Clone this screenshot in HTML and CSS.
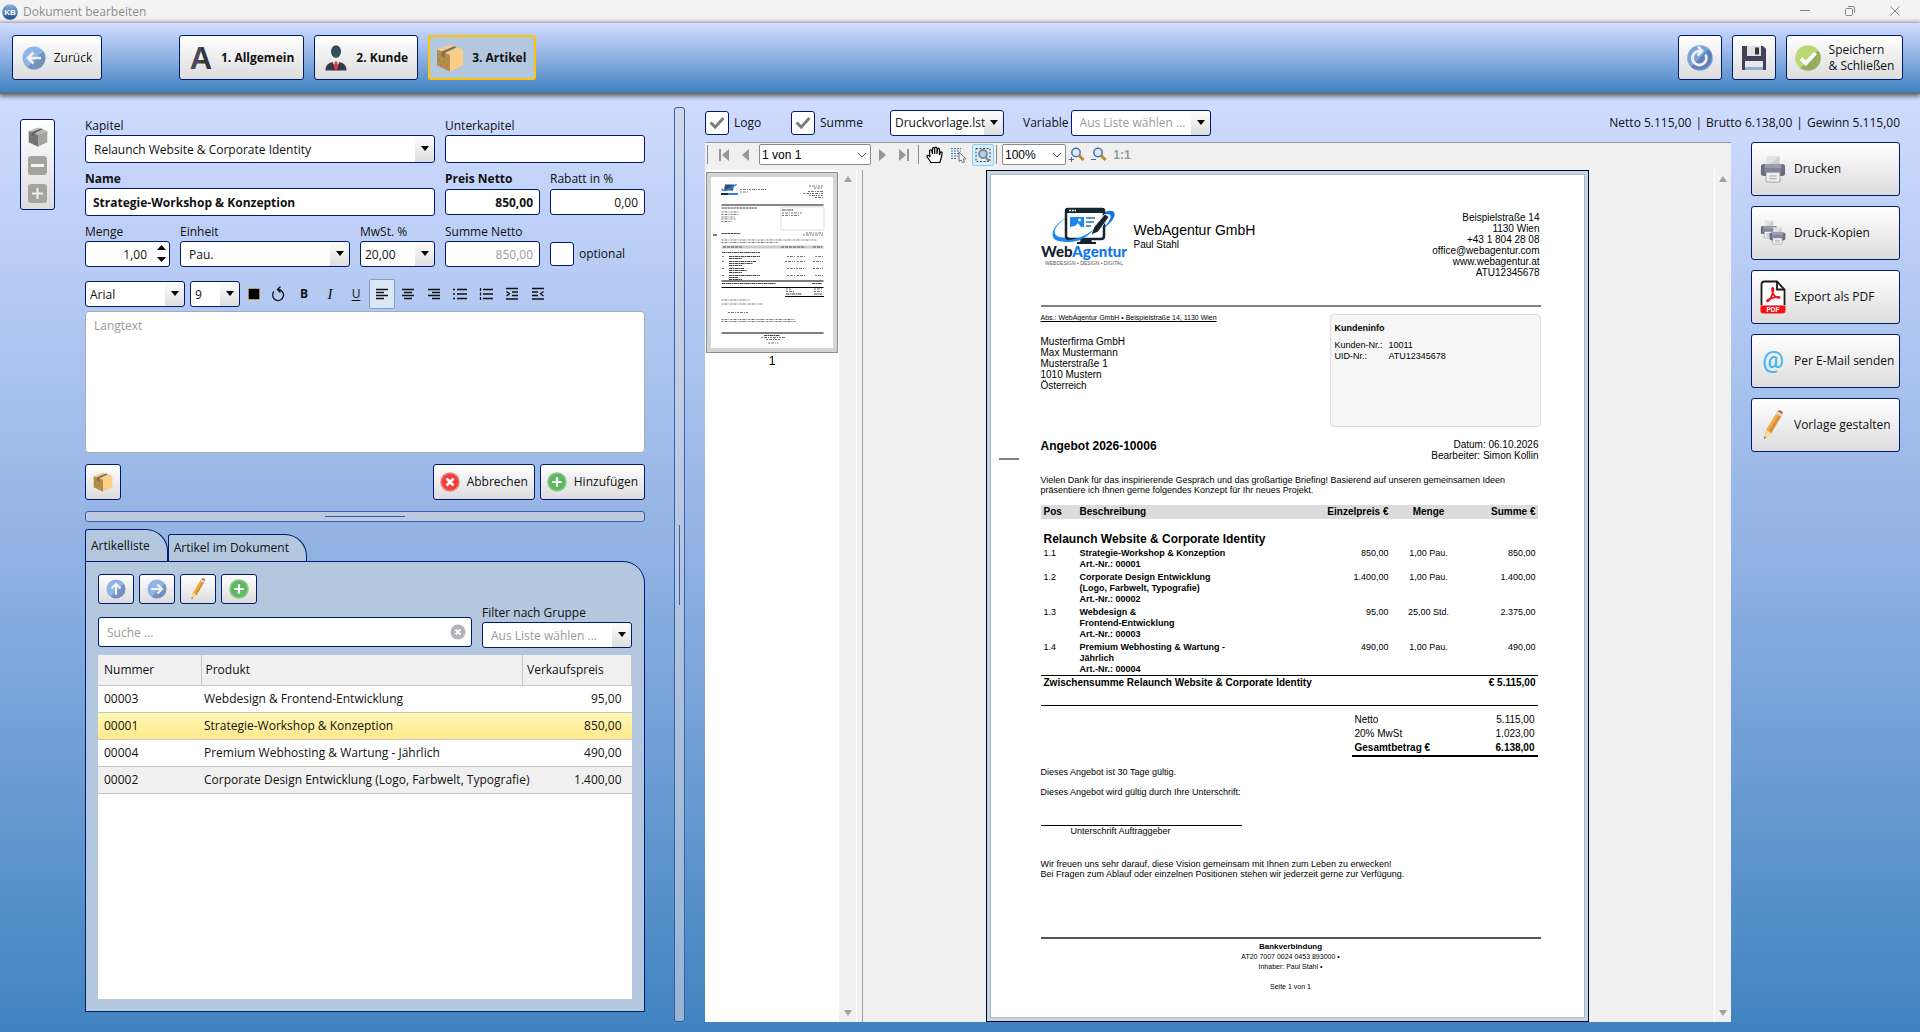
FILE: index.html
```html
<!DOCTYPE html>
<html lang="de">
<head>
<meta charset="utf-8">
<title>Dokument bearbeiten</title>
<link rel="stylesheet" href="styles.css">
</head>
<body>
<svg class="defs" aria-hidden="true">
  <defs>
    <linearGradient id="g-blue" x1="0" y1="0" x2="1" y2="1"><stop offset=".55" stop-color="#8fb4e8"/><stop offset=".56" stop-color="#7492bf"/></linearGradient>
    <linearGradient id="g-lime" x1="0" y1="0" x2="1" y2="1"><stop offset=".55" stop-color="#b9d774"/><stop offset=".56" stop-color="#98ad5c"/></linearGradient>
    <linearGradient id="g-kb" x1="0" y1="0" x2="0" y2="1"><stop offset="0" stop-color="#8fb3de"/><stop offset="1" stop-color="#1d4f93"/></linearGradient>
    <linearGradient id="g-a" x1="0" y1="0" x2="1" y2="0"><stop offset=".5" stop-color="#4d475c"/><stop offset=".51" stop-color="#333338"/></linearGradient>
    <symbol id="i-back" viewBox="0 0 24 24"><circle cx="12" cy="12" r="11.5" fill="url(#g-blue)"/><path d="M19 12H6.500M11.500 6.500L6 12l5.500 5.500" fill="none" stroke="#f3f3f3" stroke-width="2.600"/></symbol>
    <symbol id="i-up" viewBox="0 0 24 24"><circle cx="12" cy="12" r="11.5" fill="url(#g-blue)"/><path d="M12 19V6.500M6.500 11.500L12 6l5.500 5.500" fill="none" stroke="#f3f3f3" stroke-width="2.600"/></symbol>
    <symbol id="i-next" viewBox="0 0 24 24"><circle cx="12" cy="12" r="11.5" fill="url(#g-blue)"/><path d="M5 12h12.500M12.500 6.500L18 12l-5.500 5.500" fill="none" stroke="#f3f3f3" stroke-width="2.600"/></symbol>
    <symbol id="i-reload" viewBox="0 0 26 26"><circle cx="13" cy="13" r="12.800" fill="#74a5dc"/><path d="M22 4A12.800 12.800 0 0 1 4 22z" fill="#6080b4"/><path d="M18.500 9.500a7 7 0 1 1-5.500-3.500M11 1.500l4 4.500-4.500 4.500" fill="none" stroke="#f0f0f0" stroke-width="2.800"/></symbol>
    <symbol id="i-check" viewBox="0 0 26 26"><circle cx="13" cy="13" r="12.800" fill="url(#g-lime)"/><path d="M6 13.500l4.800 4.800L20.500 8" fill="none" stroke="#fafafa" stroke-width="4"/></symbol>
    <symbol id="i-add" viewBox="0 0 20 20"><circle cx="10" cy="10" r="9.800" fill="#8bc98c"/><circle cx="10" cy="10" r="8.300" fill="#5fb861"/><path d="M10 5.200v9.600M5.200 10h9.600" stroke="#fff" stroke-width="2.200"/></symbol>
    <symbol id="i-cancel" viewBox="0 0 20 20"><circle cx="10" cy="10" r="9.800" fill="#f57f79"/><circle cx="10" cy="10" r="8.300" fill="#f03e38"/><path d="M6.500 6.500l7 7M13.500 6.500l-7 7" stroke="#fff" stroke-width="2.600"/></symbol>
    <symbol id="i-box" viewBox="0 0 28 28"><path d="M1 5.500L14 .800l13 4.700-13 5.500z" fill="#f3cf91"/><path d="M1 5.500L14 11v16.500L1 21.500z" fill="#b58c48"/><path d="M27 5.500L14 11v16.500l13-6z" fill="#fbd086"/><path d="M5.500 7.400L18 2.200l3 1.100L9 8.800v5l-3.500-1.800z" fill="#84714e"/><path d="M3 15v3M5 20v2M8 17v3M11 21v3M10 14v2" stroke="#8d8a3c" stroke-width="1.200"/></symbol>
    <symbol id="i-boxgray" viewBox="0 0 28 28"><path d="M1 5.500L14 .800l13 4.700-13 5.500z" fill="#b9b9b4"/><path d="M1 5.500L14 11v16.500L1 21.500z" fill="#77777a"/><path d="M27 5.500L14 11v16.500l13-6z" fill="#a5a49d"/><path d="M5.500 7.400L18 2.200l3 1.100L9 8.800v5l-3.500-1.800z" fill="#636360"/><path d="M3 15v3M5 20v2M8 17v3M11 21v3M10 14v2" stroke="#55556a" stroke-width="1.200"/></symbol>
    <symbol id="i-person" viewBox="0 0 24 26"><ellipse cx="12" cy="6.500" rx="5" ry="6.300" fill="#2f5257"/><path d="M1.500 25.500c0-5 2-7 7-8.500l3.500 6 3.500-6c5 1.500 7 3.500 7 8.500z" fill="#3a3947"/><path d="M8.500 16h7L12 24.500z" fill="#f4f4f4"/><path d="M10.800 16.500h2.400l1 6-2.200 2.500-2.200-2.500z" fill="#e43b3b"/></symbol>
    <symbol id="i-save" viewBox="0 0 26 26"><path d="M1 1h21l3 3v21H1z" fill="#453f57"/><path d="M6 1h14v10H6z" fill="#dfe2e6"/><path d="M14 2.500h4v7h-4z" fill="#333"/><path d="M4 16h18v9H4z" fill="#e6e8ea"/><path d="M4 22h18v3H4z" fill="#8fb3cf"/></symbol>
    <symbol id="i-printer" viewBox="0 0 28 30"><path d="M7 1h14v11H7z" fill="#e3e3e3"/><path d="M21 1v11H8z" fill="#cfcfcf"/><rect x="1" y="9.500" width="26" height="13" rx="3" fill="#6d6e80"/><path d="M5 9.500h18v5H5z" fill="#9a9bac"/><path d="M5 14.500h18v4H5z" fill="#85869a"/><path d="M6.500 18.500h15V29h-15z" fill="#f1f1f3" stroke="#8a8b9a" stroke-width=".800"/><path d="M10 22.500h8M10 25.500h8" stroke="#a0a0aa" stroke-width="1.200"/></symbol>
    <symbol id="i-pdf" viewBox="0 0 26 34"><path d="M1.500 25V4.500q0-3 3-3H17l7.500 8V25" fill="#fff" stroke="#1b1b1b" stroke-width="1.800"/><path d="M17 1.500v8h7.500" fill="none" stroke="#1b1b1b" stroke-width="1.800"/><path d="M7 21.500c-1.500-2 11-5.500 12.500-4.500 1.500 1.500-4 1.500-6-2.500s-2-7-.5-6.500c2 1-3 14-6 13.500z" fill="none" stroke="#f2141c" stroke-width="1.700"/><path d="M.500 25.500h25v5q0 3-3 3h-19q-3 0-3-3z" fill="#fb0f17"/><text x="13" y="32" text-anchor="middle" font-family="Liberation Sans, sans-serif" font-weight="700" font-size="6.500" fill="#fff">PDF</text></symbol>
    <symbol id="i-pencil" viewBox="0 0 22 32"><path d="M4 21L15 3l5 3L9 24.500 2 30z" fill="#f0ad46"/><path d="M6.500 22.500L17.500 4.500l2.500 1.500L9 24.500z" fill="#d8913a"/><path d="M14 4.600L15.500 2.200l5 3L19 7.600z" fill="#d9dde2"/><path d="M15.500 2.200C17 0 22 2.500 20.500 5.200z" fill="#cc5b34"/><path d="M4 21l2.500 1.200L9 24.500 2 30z" fill="#f6d6a1"/><path d="M2.600 27.500L4 28.500 2 30z" fill="#444"/></symbol>
    <symbol id="i-tick" viewBox="0 0 24 24"><path d="M5 11.500l5 5L19 6.500" fill="none" stroke="#7b7b7b" stroke-width="3.200"/></symbol>
    <symbol id="i-zoom" viewBox="0 0 16 16"><circle cx="7" cy="5.500" r="4.200" fill="#dcebfa" stroke="#4a6ea9" stroke-width="1.500"/><path d="M10 8.500l4.500 4.500" stroke="#b98a26" stroke-width="3"/></symbol>
  </defs>
</svg>

<div class="titlebar">
  <svg class="app-logo" viewBox="0 0 16 16" aria-hidden="true"><circle cx="8" cy="8" r="7.800" fill="url(#g-kb)"/><text x="8" y="11" text-anchor="middle" font-family="Liberation Sans, sans-serif" font-weight="700" font-size="8" fill="#fff">KB</text></svg>
  <span>Dokument bearbeiten</span>
  <div class="window-controls">
    <button aria-label="Minimieren"><svg width="12" height="12" viewBox="0 0 12 12"><path d="M1 5.500h10"/></svg></button>
    <button aria-label="Wiederherstellen"><svg width="12" height="12" viewBox="0 0 12 12"><rect x="1.500" y="3.500" width="7" height="7" rx="1"/><path d="M4 1.500h5q1.500 0 1.500 1.500v5"/></svg></button>
    <button aria-label="Schließen"><svg width="12" height="12" viewBox="0 0 12 12"><path d="M1.500 1.500l9 9M10.500 1.500l-9 9"/></svg></button>
  </div>
</div>

<header class="header">
  <button class="btn tall back"><svg width="24" height="24"><use href="#i-back"/></svg>Zurück</button>
  <nav class="steps">
    <button class="btn tall step"><svg class="letter" width="24" height="26" viewBox="0 0 24 26"><text x="12" y="24" text-anchor="middle" font-family="Liberation Sans, sans-serif" font-weight="700" font-size="31" fill="url(#g-a)">A</text></svg>1. Allgemein</button>
    <button class="btn tall step"><svg width="24" height="26"><use href="#i-person"/></svg>2. Kunde</button>
    <button class="btn tall step current"><svg width="28" height="28"><use href="#i-box"/></svg>3. Artikel</button>
  </nav>
  <div class="header-actions">
    <button class="btn tall square" aria-label="Aktualisieren"><svg width="26" height="26"><use href="#i-reload"/></svg></button>
    <button class="btn tall square" aria-label="Speichern"><svg width="26" height="26"><use href="#i-save"/></svg></button>
    <button class="btn tall save-close"><svg width="26" height="26"><use href="#i-check"/></svg><span>Speichern<br>&amp; Schließen</span></button>
  </div>
</header>

<main class="main">
  <div class="tool-strip">
    <button aria-label="Artikel"><svg width="20" height="20"><use href="#i-boxgray"/></svg></button>
    <button aria-label="Entfernen"><svg width="19" height="19" viewBox="0 0 19 19"><rect width="19" height="19" rx="3" fill="#a3a49d"/><path d="M3 9.500h13" stroke="#f2f2f2" stroke-width="3"/></svg></button>
    <button aria-label="Hinzufügen"><svg width="19" height="19" viewBox="0 0 19 19"><rect width="19" height="19" rx="3" fill="#a3a49d"/><path d="M4 9.500h11M9.500 4v11" stroke="#f2f2f2" stroke-width="2"/></svg></button>
  </div>

  <section class="left">
    <form class="form">
      <div class="row row-chapter">
        <div class="field"><label for="kapitel">Kapitel</label><span class="combo"><select id="kapitel"><option>Relaunch Website &amp; Corporate Identity</option></select></span></div>
        <div class="field"><label for="unterkapitel">Unterkapitel</label><input id="unterkapitel" type="text"></div>
      </div>
      <div class="row row-name">
        <div class="field strong"><label for="name">Name</label><input id="name" type="text" value="Strategie-Workshop &amp; Konzeption"></div>
        <div class="field strong num"><label for="preis">Preis Netto</label><input id="preis" type="text" value="850,00"></div>
        <div class="field num"><label for="rabatt">Rabatt in %</label><input id="rabatt" type="text" value="0,00"></div>
      </div>
      <div class="row row-amount">
        <div class="field num"><label for="menge">Menge</label><span class="spinner"><input id="menge" type="text" value="1,00"><svg width="9" height="20" viewBox="0 0 9 20" aria-hidden="true"><path d="M0 6l4.500-5L9 6zM0 13h9l-4.500 5z"/></svg></span></div>
        <div class="field"><label for="einheit">Einheit</label><span class="combo"><select id="einheit"><option>Pau.</option></select></span></div>
        <div class="field"><label for="mwst">MwSt. %</label><span class="combo tight"><select id="mwst"><option>20,00</option></select></span></div>
        <div class="field num"><label for="summe">Summe Netto</label><input id="summe" type="text" value="850,00" disabled></div>
        <label class="check"><input type="checkbox"><span class="box"></span>optional</label>
      </div>
    </form>

    <div class="format-bar">
      <span class="combo tight font-name"><select aria-label="Schriftart"><option>Arial</option></select></span>
      <span class="combo tight font-size"><select aria-label="Schriftgröße"><option>9</option></select></span>
      <button class="fmt color" aria-label="Farbe"><svg width="14" height="14" viewBox="0 0 14 14"><path d="M1 1h12v12H1z" fill="#000" stroke="#d8c9b6"/></svg></button>
      <button class="fmt" aria-label="Zurücksetzen"><svg width="14" height="16" viewBox="0 0 14 16"><path d="M2.800 5.500a5.500 5.500 0 1 0 4.200-2M9.500.500L6.500 3.500l3 3"/></svg></button>
      <button class="fmt" aria-label="Fett"><b>B</b></button>
      <button class="fmt" aria-label="Kursiv"><i>I</i></button>
      <button class="fmt" aria-label="Unterstrichen"><u>U</u></button>
      <button class="fmt on" aria-label="Linksbündig"><svg width="14" height="14" viewBox="0 0 14 14"><path d="M1 2.500h12M1 5.500h8M1 8.500h12M1 11.500h8"/></svg></button>
      <button class="fmt" aria-label="Zentriert"><svg width="14" height="14" viewBox="0 0 14 14"><path d="M1 2.500h12M3 5.500h8M1 8.500h12M3 11.500h8"/></svg></button>
      <button class="fmt" aria-label="Rechtsbündig"><svg width="14" height="14" viewBox="0 0 14 14"><path d="M1 2.500h12M5 5.500h8M1 8.500h12M5 11.500h8"/></svg></button>
      <button class="fmt" aria-label="Aufzählung"><svg width="14" height="14" viewBox="0 0 14 14"><path d="M4 2.500h10M4 7h10M4 11.500h10M0 2.500h2M0 7h2M0 11.500h2"/></svg></button>
      <button class="fmt" aria-label="Nummerierung"><svg width="14" height="14" viewBox="0 0 14 14"><path d="M4 2.500h10M4 7h10M4 11.500h10M1.500 1v3M1.500 5.500v3M1.500 10v3"/></svg></button>
      <button class="fmt" aria-label="Einzug vergrößern"><svg width="14" height="14" viewBox="0 0 14 14"><path d="M1 1.500h12M7 5h6M7 8.500h6M1 12h12M1.500 4.500l3 2.300-3 2.300"/></svg></button>
      <button class="fmt" aria-label="Einzug verkleinern"><svg width="14" height="14" viewBox="0 0 14 14"><path d="M1 1.500h12M1 5h6M1 8.500h6M1 12h12M12.500 4.500l-3 2.300 3 2.300"/></svg></button>
    </div>
    <textarea class="longtext" placeholder="Langtext" aria-label="Langtext"></textarea>

    <div class="form-actions">
      <button class="btn mid square" aria-label="Artikel"><svg width="22" height="20"><use href="#i-box"/></svg></button>
      <button class="btn mid push"><svg width="20" height="20"><use href="#i-cancel"/></svg>Abbrechen</button>
      <button class="btn mid"><svg width="20" height="20"><use href="#i-add"/></svg>Hinzufügen</button>
    </div>

    <div class="splitter-h"></div>

    <div class="tabs" role="tablist">
      <button class="tab active" role="tab" aria-selected="true">Artikelliste</button>
      <button class="tab" role="tab">Artikel im Dokument</button>
    </div>
    <div class="panel">
      <div class="panel-tools">
        <button class="btn small" aria-label="Nach oben"><svg width="20" height="20"><use href="#i-up"/></svg></button>
        <button class="btn small" aria-label="Übernehmen"><svg width="20" height="20"><use href="#i-next"/></svg></button>
        <button class="btn small" aria-label="Bearbeiten"><svg width="16" height="24"><use href="#i-pencil"/></svg></button>
        <button class="btn small" aria-label="Neu"><svg width="20" height="20"><use href="#i-add"/></svg></button>
      </div>
      <div class="filters">
        <div class="search"><input type="text" placeholder="Suche ..." aria-label="Suche"><svg width="16" height="16" viewBox="0 0 16 16" aria-hidden="true"><circle cx="8" cy="8" r="7.500" fill="#b3b4bb"/><path d="M5.500 5.500l5 5M10.500 5.500l-5 5" stroke="#fff" stroke-width="1.800"/></svg></div>
        <div class="field group"><label for="gruppe">Filter nach Gruppe</label><span class="combo hint"><select id="gruppe"><option>Aus Liste wählen ...</option></select></span></div>
      </div>
      <div class="grid-area">
        <table class="products">
          <colgroup><col class="c-num"><col><col class="c-price"></colgroup>
          <thead><tr><th>Nummer</th><th>Produkt</th><th>Verkaufspreis</th></tr></thead>
          <tbody>
            <tr><td>00003</td><td>Webdesign &amp; Frontend-Entwicklung</td><td>95,00</td></tr>
            <tr class="selected"><td>00001</td><td>Strategie-Workshop &amp; Konzeption</td><td>850,00</td></tr>
            <tr><td>00004</td><td>Premium Webhosting &amp; Wartung - Jährlich</td><td>490,00</td></tr>
            <tr class="alt"><td>00002</td><td>Corporate Design Entwicklung (Logo, Farbwelt, Typografie)</td><td>1.400,00</td></tr>
          </tbody>
        </table>
      </div>
    </div>
  </section>

  <div class="splitter-v"></div>

  <section class="right">
    <div class="options">
      <label class="check logo-check"><input type="checkbox" checked><span class="box"><svg width="22" height="22"><use href="#i-tick"/></svg></span>Logo</label>
      <label class="check sum-check"><input type="checkbox" checked><span class="box"><svg width="22" height="22"><use href="#i-tick"/></svg></span>Summe</label>
      <span class="combo tight template"><select aria-label="Druckvorlage"><option>Druckvorlage.lst</option></select></span>
      <label class="var-label" for="variable">Variable</label>
      <span class="combo hint variable"><select id="variable"><option>Aus Liste wählen ...</option></select></span>
      <p class="totals-line"><span>Netto 5.115,00</span><span>|</span><span>Brutto 6.138,00</span><span>|</span><span>Gewinn 5.115,00</span></p>
    </div>

    <div class="preview-row">
      <div class="viewer">
        <div class="viewer-bar">
          <i class="sep"></i>
          <button class="nav" aria-label="Erste Seite"><svg width="12" height="12" viewBox="0 0 12 12"><path d="M1 0h2v12H1zM11 0v12L4 6z"/></svg></button>
          <button class="nav" aria-label="Vorherige Seite"><svg width="12" height="12" viewBox="0 0 12 12"><path d="M9 0v12L2 6z"/></svg></button>
          <span class="native page-select"><select aria-label="Seite"><option>1 von 1</option></select><svg width="10" height="6" viewBox="0 0 10 6"><path d="M1 1l4 4 4-4"/></svg></span>
          <button class="nav" aria-label="Nächste Seite"><svg width="12" height="12" viewBox="0 0 12 12"><path d="M3 0v12l7-6z"/></svg></button>
          <button class="nav" aria-label="Letzte Seite"><svg width="12" height="12" viewBox="0 0 12 12"><path d="M9 0h2v12H9zM1 0v12l7-6z"/></svg></button>
          <i class="sep tools-sep"></i>
          <button class="nav tool" aria-label="Verschieben"><svg width="18" height="18" viewBox="0 0 18 18"><path d="M5 16.500c-1-2-3-4-4-6 0-1.500 1.800-1.500 3 .5L3.500 5c0-1.500 2-1.500 2.300 0L6.500 8V2.800c0-1.500 2-1.500 2.200 0V8 2.200c.2-1.500 2.200-1.500 2.300 0V8l.5-4.500c.3-1.500 2-1.300 2 0V9l.8-2.500c.5-1.200 2-.8 1.800.5-.3 4-1.300 6-2.300 9.500z" fill="#fff" stroke="#000" stroke-width="1.200"/></svg></button>
          <button class="nav tool" aria-label="Text auswählen"><svg width="16" height="16" viewBox="0 0 16 16"><path d="M0 1.500h10M0 4h10M0 6.500h10M0 9h7M0 11.500h6" stroke="#3f73b5" stroke-width="1.200" stroke-dasharray="2 1"/><path d="M8 5l7 7h-3l1.500 3-1.800.8L10.200 13 8 14.500z" fill="#f2f2f2" stroke="#777"/></svg></button>
          <button class="nav tool on" aria-label="Lupe"><svg width="16" height="16" viewBox="0 0 16 16"><rect x="1" y="1.500" width="14" height="13" fill="none" stroke="#444" stroke-dasharray="2 1.500"/><circle cx="8" cy="7" r="4" fill="#b8cfe8" stroke="#7c8792" stroke-width="1.800"/><path d="M10.500 10l3.500 4" stroke="#8a8a8a" stroke-width="2.400"/></svg></button>
          <i class="sep zoom-sep"></i>
          <span class="native zoom-select"><select aria-label="Zoom"><option>100%</option></select><svg width="10" height="6" viewBox="0 0 10 6"><path d="M1 1l4 4 4-4"/></svg></span>
          <button class="nav zoom" aria-label="Vergrößern"><svg width="16" height="16" viewBox="0 0 16 16"><use href="#i-zoom"/><path d="M0 12.500h5M2.500 10v5" stroke="#3b62a8"/></svg></button>
          <button class="nav zoom" aria-label="Verkleinern"><svg width="16" height="16" viewBox="0 0 16 16"><use href="#i-zoom"/><path d="M0 12.500h5" stroke="#3b62a8"/></svg></button>
          <button class="nav one" aria-label="Originalgröße">1:1</button>
        </div>

        <div class="viewer-body">
          <div class="thumbs">
            <div class="thumb">
              <svg viewBox="0 0 122 171" aria-hidden="true">
                <path fill="#fff" d="M0 0h122v171H0z"/>
                <path d="M14 7.500h9l-1 6h-9z" fill="#34506a"/><path d="M10.500 12c2 3 9 1 15-5" stroke="#2a8be8" stroke-width="1.500" fill="none"/>
                <path d="M10 17h7" stroke="#1d2a3a" stroke-width="2"/><path d="M17 17h10" stroke="#2a7ee0" stroke-width="2"/>
                <g fill="none" stroke="#777" stroke-width="1" stroke-dasharray="2 1 3 1 1 1">
                  <path d="M29 12.500h26M29 15h9M98 9h14M103 11h9M97 14.500h15M92 16.500h20M98 18.500h14M104 20.500h8"/>
                  <path d="M10.500 35h18M10.500 37.500h18M10.500 40h13M10.500 42h14M10.500 44.500h10"/>
                  <path d="M71 36h20M71 38.500h18M95 56h17M92 58h20M10.500 63h95M10.500 65.500h56"/>
                  <path d="M11 79.500h2M76 79.500h8M86 79.500h8M104 79.500h8M11 84.500h2M74 84.500h10M86 84.500h8M102 84.500h10M11 91.500h2M76 91.500h8M85 91.500h9M102 91.500h10M11 98.500h2M76 98.500h8M86 98.500h8M104 98.500h8"/>
                  <path d="M75 112h5M103 112h8M75 114.500h9M103 114.500h8M10.500 123h28M10.500 127h41M17 135.500h20M10.500 142.500h73M10.500 144.500h75M50 160.500h24M55 162.500h14M57 166h10"/>
                </g>
                <g fill="none" stroke="#444" stroke-width="1" stroke-dasharray="3 .500 2 .500">
                  <path d="M10.500 31h36M71 33h11M10.500 56.500h19M11 75.500h38M18 79.500h31M18 81.500h13M18 84.500h27M18 86.500h24M18 88.500h13M18 91.500h15M18 93.500h18M18 95.500h13M18 98.500h31M18 100.500h9M18 102.500h13M11 106.500h54M101 106.500h10M75 117h16M103 117h8M53 158.500h16"/>
                </g>
                <path d="M70 30h43v23H70z" fill="none" stroke="#ddd"/>
                <path d="M10.500 68.500h102v3h-102z" fill="#ccc"/><path d="M12 70h20M70 70h24M102 70h9" stroke="#555" stroke-dasharray="3 1"/>
                <path d="M10.500 28h102" stroke="#888" stroke-width="2"/><path d="M2 58h4" stroke="#777" stroke-width="2"/>
                <path d="M10.500 104h102M10.500 110.500h102M74 119.500h39" stroke="#000"/><path d="M10.500 156h102" stroke="#555" stroke-width="1.500"/>
              </svg>
            </div>
            <span class="thumb-no">1</span>
          </div>
          <div class="scroll"><i class="up"></i><i class="down"></i></div>
          <div class="pane-split"></div>
          <div class="canvas">
            <article class="sheet">
              <i class="fold"></i>
              <div class="letterhead">
                <svg class="brand" width="88" height="60" viewBox="0 0 88 60" role="img" aria-label="WebAgentur">
                  <path d="M27 11C15 18 10 27 17 30.500c8 3.500 28-2 40-11-11 12-34 20-43 14C8 28 14 17 27 11z" fill="#1e87ee"/>
                  <path d="M59 8c6-3 13-5 14.500-1 1.500 5-6 12-13 17 5-5 10-11 9-14.500-.8-2-5-1.500-10.500.500z" fill="#1473e4"/>
                  <path d="M27 3h34q2 0 2 2v25q0 3-3 3H29q-4 0-4-3V5q0-2 2-2z" fill="#fff" stroke="#15242e" stroke-width="2.500"/>
                  <path d="M25 2h38v5H25zM40 33h10l1 3h4v2H36v-2h3z" fill="#15242e"/>
                  <path d="M28 4.500h7" stroke="#fff" stroke-width="1.500" stroke-dasharray="2 .8"/>
                  <path d="M29 11h14v10h-3l-3-4-3 3-5 1z" fill="#1b87ef"/><circle cx="38.500" cy="14" r="1.500" fill="#fff"/>
                  <path d="M45 12h9M45 16h8M45 20h5" stroke="#2a6db5" stroke-width="1.500"/>
                  <path d="M50 29l3-8L64 8l4 3-11 15z" fill="#15242e" stroke="#fff" stroke-width=".8"/>
                  <path d="M16 32c10 5 27 0 37-9-8 11-26 18-37 9z" fill="#1e87ee"/>
                  <text x="0" y="51" font-family="Lato, sans-serif" font-weight="900" font-size="15" fill="#15242e">Web<tspan fill="#1276ea">Agentur</tspan></text>
                  <text x="43" y="59" text-anchor="middle" font-family="Liberation Sans, sans-serif" font-size="5" fill="#555">WEBDESIGN • DESIGN • DIGITAL</text>
                </svg>
                <div class="company"><h1>WebAgentur GmbH</h1><p>Paul Stahl</p></div>
                <address>Beispielstraße 14<br>1130 Wien<br>+43 1 804 28 08<br>office@webagentur.com<br>www.webagentur.at<br>ATU12345678</address>
              </div>
              <div class="recipient">
                <div>
                  <p class="sender">Abs.: WebAgentur GmbH • Beispielstraße 14, 1130 Wien</p>
                  <p class="to">Musterfirma GmbH<br>Max Mustermann<br>Musterstraße 1<br>1010 Mustern<br>Österreich</p>
                </div>
                <div class="info">
                  <h2>Kundeninfo</h2>
                  <dl><dt>Kunden-Nr.:</dt><dd>10011</dd><dt>UID-Nr.:</dt><dd>ATU12345678</dd></dl>
                </div>
              </div>
              <div class="subject"><h2>Angebot 2026-10006</h2><p>Datum: 06.10.2026<br>Bearbeiter: Simon Kollin</p></div>
              <p class="intro">Vielen Dank für das inspirierende Gespräch und das großartige Briefing! Basierend auf unseren gemeinsamen Ideen<br>präsentiere ich Ihnen gerne folgendes Konzept für Ihr neues Projekt.</p>
              <table class="items">
                <colgroup><col class="w-pos"><col><col class="w-price"><col class="w-qty"><col class="w-sum"></colgroup>
                <thead><tr><th>Pos</th><th>Beschreibung</th><th>Einzelpreis €</th><th>Menge</th><th>Summe €</th></tr></thead>
                <tbody>
                  <tr class="chapter"><th colspan="5">Relaunch Website &amp; Corporate Identity</th></tr>
                  <tr><td>1.1</td><td>Strategie-Workshop &amp; Konzeption<br>Art.-Nr.: 00001</td><td>850,00</td><td>1,00 Pau.</td><td>850,00</td></tr>
                  <tr><td>1.2</td><td>Corporate Design Entwicklung<br>(Logo, Farbwelt, Typografie)<br>Art.-Nr.: 00002</td><td>1.400,00</td><td>1,00 Pau.</td><td>1.400,00</td></tr>
                  <tr><td>1.3</td><td>Webdesign &amp;<br>Frontend-Entwicklung<br>Art.-Nr.: 00003</td><td>95,00</td><td>25,00 Std.</td><td>2.375,00</td></tr>
                  <tr><td>1.4</td><td>Premium Webhosting &amp; Wartung -<br>Jährlich<br>Art.-Nr.: 00004</td><td>490,00</td><td>1,00 Pau.</td><td>490,00</td></tr>
                </tbody>
                <tfoot><tr><th colspan="4">Zwischensumme Relaunch Website &amp; Corporate Identity</th><th>€ 5.115,00</th></tr></tfoot>
              </table>
              <dl class="sums"><dt>Netto</dt><dd>5.115,00</dd><dt>20% MwSt</dt><dd>1.023,00</dd><dt class="grand">Gesamtbetrag €</dt><dd class="grand">6.138,00</dd></dl>
              <p class="note">Dieses Angebot ist 30 Tage gültig.</p>
              <p class="note">Dieses Angebot wird gültig durch Ihre Unterschrift:</p>
              <p class="signature">Unterschrift Auftraggeber</p>
              <p class="closing">Wir freuen uns sehr darauf, diese Vision gemeinsam mit Ihnen zum Leben zu erwecken!<br>Bei Fragen zum Ablauf oder einzelnen Positionen stehen wir jederzeit gerne zur Verfügung.</p>
              <footer class="bank"><b>Bankverbindung</b><span>AT20 7007 0024 0453 893000 •</span><span>Inhaber: Paul Stahl •</span><span class="page-no">Seite 1 von 1</span></footer>
            </article>
          </div>
          <div class="scroll edge"><i class="up"></i><i class="down"></i></div>
        </div>
      </div>

      <div class="outputs">
        <button class="btn output"><svg width="28" height="30"><use href="#i-printer"/></svg>Drucken</button>
        <button class="btn output"><svg width="32" height="32" viewBox="0 0 32 32"><use href="#i-printer" x="0" y="0" width="22" height="23"/><use href="#i-printer" x="11" y="8" width="21" height="23"/></svg>Druck-Kopien</button>
        <button class="btn output"><svg width="26" height="34"><use href="#i-pdf"/></svg>Export als PDF</button>
        <button class="btn output"><svg width="26" height="28" viewBox="0 0 26 28"><text x="13" y="21" text-anchor="middle" font-family="Roboto, sans-serif" font-weight="500" font-size="24" fill="#45b6f0">@</text></svg>Per E-Mail senden</button>
        <button class="btn output"><svg width="22" height="32"><use href="#i-pencil"/></svg>Vorlage gestalten</button>
      </div>
    </div>
  </section>
</main>
</body>
</html>
```
FILE: styles.css
```css
* { box-sizing: border-box; }

html, body { margin: 0; }

body {
  display: flex;
  flex-direction: column;
  min-height: 100vh;
  font: 12px/16px "Open Sans", "Noto Sans", sans-serif;
  color: #111;
}

button, input, select, textarea { font: inherit; color: inherit; margin: 0; }
p, h1, h2, dl, dd { margin: 0; }
svg { flex: none; display: block; }
.defs { position: absolute; width: 0; height: 0; }

/* Window title */
.titlebar {
  display: flex;
  align-items: center;
  gap: 5px;
  height: 23px;
  padding-left: 2px;
  background: #f3f3f3;
  color: #8d8d8d;
}
.app-logo { width: 16px; height: 16px; }
.window-controls { display: flex; margin-left: auto; }
.window-controls button {
  display: grid;
  place-items: center;
  width: 45px;
  height: 22px;
  padding: 0 0 2px;
  border: 0;
  background: none;
}
.window-controls button:last-child { margin-right: 3px; }
.window-controls svg { fill: none; stroke: #858585; }

/* Buttons */
.btn {
  display: flex;
  align-items: center;
  justify-content: center;
  gap: 8px;
  padding: 0 10px;
  border: 1px solid #001a6e;
  border-radius: 3px;
  background: linear-gradient(#fff, #dcdcdc);
  text-align: left;
  white-space: nowrap;
}
.btn.tall { height: 45px; }
.btn.mid { height: 36px; padding: 0 6px; gap: 7px; }
.btn.square { padding: 0; width: 44px; }
.btn.mid.square { width: 36px; }
.btn.small { width: 36px; height: 30px; padding: 0; }

/* Header */
.header {
  display: flex;
  align-items: flex-start;
  height: 71px;
  padding: 12px 17px 0 12px;
  border-bottom: 2px solid #6d6d6d;
  background: linear-gradient(#d0dcff, #8fb1e3 50%, #4083c0);
  box-shadow: 0 1px 5px 1px rgba(0, 0, 0, .6);
  position: relative;
}
.back { width: 90px; }
.steps { display: flex; gap: 10px; margin-left: 77px; }
.btn.step { padding: 0 9px; font-weight: 700; }
.btn.step.current { border: 2px solid #ffc400; background: #b3c7df; padding: 0 8px 0 6px; }
.letter { overflow: visible; }
.header-actions { display: flex; gap: 10px; margin-left: auto; }
.save-close { width: 117px; }

/* Main area */
.main {
  flex: 1;
  display: flex;
  align-items: stretch;
  padding: 13px 20px 10px;
  background: linear-gradient(#d0dcff, #8fb1e3 50%, #4083c0);
}
.tool-strip {
  display: flex;
  flex-direction: column;
  align-items: center;
  align-self: flex-start;
  gap: 9px;
  width: 35px;
  height: 91px;
  margin: 12px 30px 0 0;
  padding: 7px 0;
  border: 1px solid #001a6e;
  border-radius: 3px;
  background: linear-gradient(#fff, #dcdcdc);
}
.tool-strip button { padding: 0; border: 0; background: none; }

.left {
  display: flex;
  flex-direction: column;
  flex: 0 0 560px;
  margin: 11px 0 10px;
}
.form { display: grid; gap: 8px; }
.row { display: grid; gap: 10px; align-items: end; }
.row-chapter { grid-template-columns: minmax(0, 350fr) minmax(0, 200fr); }
.row-name { grid-template-columns: minmax(0, 350fr) minmax(0, 95fr) minmax(0, 95fr); }
.row-amount { grid-template-columns: minmax(0, 85fr) minmax(0, 170fr) minmax(0, 75fr) minmax(0, 95fr) minmax(0, 95fr); }
.field { display: flex; flex-direction: column; gap: 1px; }
.strong { font-weight: 700; }
.field input, .field select, .search input {
  width: 100%;
  height: 28px;
  padding: 1px 7px 0;
  border: 1px solid #001a6e;
  border-radius: 3px;
  background: #fff;
}
.field.num input { height: 26px; text-align: right; padding: 0 6px; }
.row-name .field.num input { margin: 1px 0; }
.row-amount select { height: 26px; }
.field input:disabled { color: #9b9b9b; }

.combo { display: block; position: relative; }
.combo select {
  appearance: none;
  display: block;
  width: 100%;
  height: 28px;
  padding: 1px 20px 0 8px;
  border: 1px solid #001a6e;
  border-radius: 3px;
  background: linear-gradient(#fdfdfd, #dedede) right / 19px 100% no-repeat #fff;
}
.combo.tight select { padding-left: 4px; padding-right: 18px; }
.combo.hint select { color: #9b9b9b; }
.combo::after {
  content: "";
  position: absolute;
  right: 6px;
  top: 50%;
  margin-top: -3px;
  border: 4px solid transparent;
  border-top: 5px solid #000;
  border-bottom: 0;
  pointer-events: none;
}
.row-amount .combo select, .format-bar .combo select, .options .combo select, .group .combo select { height: 26px; }
.spinner { display: block; position: relative; }
.field.num .spinner input { padding-right: 22px; }
.spinner svg { position: absolute; right: 4px; top: 3px; }

.check { display: flex; align-items: center; gap: 5px; height: 26px; position: relative; }
.check input { position: absolute; width: 24px; height: 24px; opacity: 0; margin: 0; }
.check .box {
  display: grid;
  place-items: center;
  width: 24px;
  height: 24px;
  border: 1px solid #001a6e;
  border-radius: 3px;
  background: #fff;
}

/* Text formatting */
.format-bar { display: flex; align-items: center; height: 30px; margin-top: 12px; }
.font-name { width: 100px; margin-right: 5px; }
.font-size { width: 50px; margin-right: 3px; }
.fmt {
  display: grid;
  place-items: center;
  width: 26px;
  height: 30px;
  padding: 0;
  border: 1px solid transparent;
  border-radius: 2px;
  background: none;
}
.fmt.color { width: 22px; }
.fmt.on { border-color: #7f9fd3; background: #dce7f6; }
.fmt svg { fill: none; stroke: #111; stroke-width: 1.3; }
.fmt i { font-family: "Liberation Serif", serif; font-size: 15px; }
.fmt u { text-underline-offset: 2px; }
.longtext {
  height: 142px;
  margin-top: 2px;
  padding: 6px 8px;
  border: 1px solid #a9acb4;
  border-radius: 4px;
  background: #fff;
  resize: none;
}
::placeholder { color: #9b9b9b; opacity: 1; }

.form-actions { display: flex; gap: 5px; margin-top: 11px; }
.push { margin-left: auto; }

.splitter-h, .splitter-v {
  display: grid;
  place-items: center;
  border: 1px solid #3a5ea8;
  border-radius: 3px;
  background: rgba(196, 208, 224, .8);
}
.splitter-h { height: 11px; margin-top: 11px; }
.splitter-h::before { content: ""; width: 80px; height: 1px; background: #3a5ea8; }
.splitter-v { width: 11px; margin: 0 20px 0 29px; background: rgba(208, 214, 224, .6); }
.splitter-v::before { content: ""; width: 1px; height: 80px; background: #3a5ea8; }

/* Article list */
.tabs { display: flex; align-items: flex-end; margin-top: 7px; }
.tab {
  height: 27px;
  padding: 0 17px 0 5px;
  border: 1px solid #001a6e;
  border-bottom: 0;
  border-radius: 3px 22px 0 0;
  background: #b3c7df;
}
.tab.active { height: 32px; }
.panel {
  flex: 1;
  display: flex;
  flex-direction: column;
  padding: 12px;
  border: 1px solid #001a6e;
  border-radius: 0 22px 0 0;
  background: #b3c7df;
}
.panel-tools { display: flex; gap: 5px; }
.filters { display: flex; align-items: flex-end; gap: 10px; margin-top: 1px; }
.search { flex: 1; position: relative; }
.search input { display: block; height: 30px; margin-bottom: 1px; padding: 0 30px 0 8px; }
.search svg { position: absolute; right: 6px; top: 7px; }
.group { width: 150px; }
.grid-area { flex: 1; margin-top: 7px; background: #fff; }
.products { width: 100%; border-collapse: collapse; table-layout: fixed; }
.c-num { width: 103px; }
.c-price { width: 109px; }
.products th {
  height: 30px;
  padding: 0 4px;
  border: 1px solid #c6c6c6;
  border-width: 0 1px 1px 0;
  background: #f0f0f0;
  font-weight: 400;
  text-align: left;
}
.products th:first-child, .products td:first-child { padding-left: 6px; }
.products td { height: 27px; padding: 1px 3px 0; border-bottom: 1px solid #c6c6c6; white-space: nowrap; }
.products td:last-child { padding-right: 10px; text-align: right; }
.products .selected { background: linear-gradient(#fff9b8, #fee88c); }
.products .alt { background: #f0f0f0; }

/* Preview side */
.right { flex: 1; min-width: 0; display: flex; flex-direction: column; }
.options { display: flex; align-items: center; height: 35px; padding: 0 0 4px; }
.logo-check { width: 86px; }
.sum-check { width: 99px; }
.template { width: 114px; }
.var-label { margin: 0 2px 0 19px; }
.variable { width: 140px; }
.totals-line { display: flex; gap: 4px; margin-left: auto; white-space: nowrap; }
.preview-row { flex: 1; display: flex; gap: 20px; }

.viewer {
  flex: 1;
  min-width: 0;
  display: flex;
  flex-direction: column;
  border-top: 1px solid #9b9b9b;
  background: #f0f0f0;
  font-family: "Liberation Sans", Arial, sans-serif;
}
.viewer-bar { display: flex; align-items: center; height: 27px; padding: 0 0 4px 2px; }
.sep { width: 1px; height: 19px; margin-right: 5px; background: #8b8b8b; }
.tools-sep { margin: 0 5px 0 3px; }
.zoom-sep { margin-right: 3px; }
.nav { display: grid; place-items: center; width: 22px; height: 22px; padding: 0; border: 0; background: none; fill: #979797; }
.nav.tool { margin-right: 2px; }
.nav.on { border: 1px solid #8fcdf3; border-radius: 2px; background: #d9edfa; }
.nav.one { width: 24px; font-weight: 700; color: #9a9a9a; }
.native { position: relative; margin: 0 0 0 2px; }
.native select {
  appearance: none;
  display: block;
  width: 100%;
  height: 21px;
  padding: 0 20px 0 2px;
  border: 1px solid #8b8b8b;
  border-radius: 2px;
  background: #fff;
  color: #000;
}
.native svg { position: absolute; right: 4px; top: 8px; fill: none; stroke: #555; pointer-events: none; }
.page-select { width: 112px; }
.zoom-select { width: 64px; }

.viewer-body { flex: 1; display: flex; }
.thumbs { display: flex; flex-direction: column; align-items: center; width: 134px; padding: 2px 1px; background: #fff; }
.thumb { width: 132px; padding: 4px; border: 1px solid #8b8b8b; background: #d4d4d4; }
.thumb svg { width: 100%; }
.thumb-no { font-size: 12px; color: #000; }
.scroll { display: flex; flex-direction: column; justify-content: space-between; align-items: center; width: 17px; padding: 6px 0; }
.scroll.edge { border-left: 1px solid #fff; }
.scroll i { border: 4px solid transparent; }
.scroll .up { border-top: 0; border-bottom: 6px solid #a0a0a0; }
.scroll .down { border-bottom: 0; border-top: 6px solid #a0a0a0; }
.pane-split { width: 7px; border-left: 1px solid #fff; border-right: 1px solid #9b9b9b; }
.canvas { flex: 1; display: flex; justify-content: center; padding-right: 3px; }

/* Printed sheet */
.sheet {
  display: flex;
  flex-direction: column;
  position: relative;
  width: 603px;
  padding: 31px 47px 29px 54px;
  border: 1px solid #000;
  background: #fff;
  box-shadow: inset 0 0 0 3px #bcd7ee, inset 0 0 0 4px #b5b5b5;
  font: 10px/11px "Liberation Sans", Arial, sans-serif;
  color: #000;
}
.fold { position: absolute; left: 12px; top: 287px; width: 20px; height: 2px; background: #808080; }
.letterhead { display: flex; padding: 4px 0 39px; border-bottom: 2px solid #808080; }
.company { margin: 15px 0 0 5px; }
.company h1 { font-size: 14px; line-height: 18px; font-weight: 400; }
.letterhead address { margin: 6px 1px -20px auto; font-style: normal; text-align: right; }
.recipient { display: flex; justify-content: space-between; }
.sender { margin-top: 6px; font-size: 7px; line-height: 10px; text-decoration: underline; }
.to { margin-top: 13px; }
.info { width: 211px; height: 113px; margin-top: 7px; padding: 8px 4px; border: 1px solid #dcdcdc; border-radius: 4px; background: #f6f6f6; font-size: 9px; }
.info h2 { font-size: 9px; margin-bottom: 6px; }
.info dl { display: grid; grid-template-columns: 54px 1fr; }
.subject { display: flex; justify-content: space-between; margin: 12px 2px 0 0; }
.subject h2 { font-size: 12px; line-height: 14px; }
.subject p { text-align: right; }
.intro, .note, .closing { font-size: 9px; line-height: 10px; white-space: nowrap; }
.intro { margin-top: 14px; }

.items { margin: 10px 3px 0 0; border-collapse: collapse; table-layout: fixed; font-size: 9px; }
.w-pos { width: 36px; }
.w-price { width: 70px; }
.w-qty { width: 76px; }
.w-sum { width: 71px; }
.items th, .items td { padding: 0 3px; text-align: left; vertical-align: top; }
.items th { font-size: 10px; line-height: 14px; }
.items thead { background: #dcdcdc; }
.items td { padding-bottom: 2px; }
.items tbody tr:last-child td { padding-bottom: 0; }
.items td:nth-child(2) { font-weight: 700; }
.items tr > :nth-child(3), .items tr > :nth-child(5), .items tfoot th:last-child { text-align: right; padding-right: 2px; }
.items tr > :nth-child(4) { text-align: center; }
.items thead th { white-space: nowrap; }
.items .chapter th { padding-top: 13px; padding-bottom: 2px; font-size: 12px; }
.items tfoot tr { border: 1px solid #000; border-width: 1px 0; }
.items tfoot th { padding-bottom: 15px; white-space: nowrap; }
.sums {
  display: grid;
  grid-template-columns: 1fr 1fr;
  align-self: flex-end;
  width: 186px;
  margin: 7px 3px 0 0;
  border-bottom: 2px solid #000;
  line-height: 14px;
}
.sums dt { padding-left: 3px; }
.sums dd { padding-right: 3px; text-align: right; }
.grand { font-weight: 700; }
.note { margin-top: 10px; }
.signature { width: 201px; margin-top: 28px; padding-left: 30px; border-top: 1px solid #000; font-size: 9px; }
.closing { margin-top: 22px; }
.bank {
  display: flex;
  flex-direction: column;
  align-items: center;
  margin-top: auto;
  padding-top: 3px;
  border-top: 2px solid #555;
  font-size: 7px;
  line-height: 10px;
}
.bank b { font-size: 8px; }
.page-no { margin-top: 10px; }

/* Output actions */
.outputs { display: flex; flex-direction: column; gap: 10px; width: 149px; }
.output { height: 54px; justify-content: flex-start; padding: 0 8px; }
.output svg { width: 26px; }
```
